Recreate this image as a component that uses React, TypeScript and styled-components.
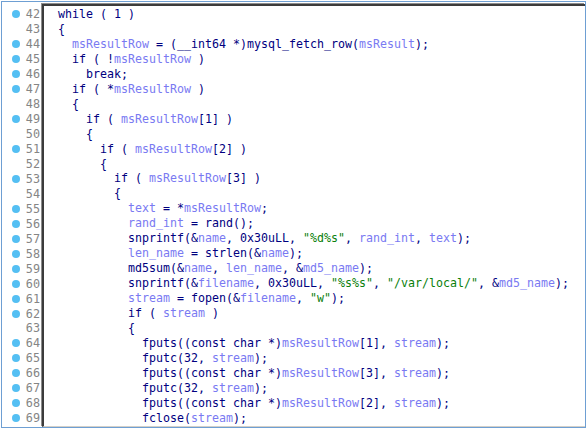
import React from "react";
import styled, { createGlobalStyle } from "styled-components";

const Global = createGlobalStyle`
  html, body { margin: 0; padding: 0; background: #ffffff; }
  body { width: 588px; height: 430px; overflow: hidden; }
`;

const ROW_H = 14.96;

const Frame = styled.div`
  box-sizing: border-box;
  margin: 1px;
  width: 585px;
  height: 427px;
  border: 1px solid #6e9fd3;
  display: flex;
  flex-direction: row;
  background: #ffffff;
  overflow: hidden;
`;

const Gutter = styled.div`
  width: 40px;
  flex: 0 0 40px;
  padding-top: 5px;
  display: flex;
  flex-direction: column;
  background: #ffffff;
`;

const GutterRow = styled.div`
  height: ${ROW_H}px;
  display: flex;
  align-items: center;
`;

const Dot = styled.span<{ $on: boolean }>`
  width: 8px;
  height: 8px;
  margin-left: 10px;
  border-radius: 50%;
  background: ${(p) => (p.$on ? "#54bff3" : "transparent")};
  flex: 0 0 8px;
`;

const LineNo = styled.span`
  flex: 1;
  text-align: right;
  padding-right: 2px;
  font-family: "DejaVu Sans Mono", monospace;
  font-size: 11.8px;
  color: #858585;
`;

const CodePanel = styled.div`
  flex: 1;
  margin-top: 2px;
  padding-top: 1px;
  border-top: 2px solid #3c3c3c;
  border-left: 2px solid #3c3c3c;
  border-bottom: 1px solid #d4d0c8;
  box-shadow: -1px -1px 0 #8d8d8d;
  background: #ffffff;
  padding-left: 14px;
  overflow: hidden;
`;

const CodeLine = styled.div`
  height: ${ROW_H}px;
  line-height: ${ROW_H}px;
  white-space: pre;
  font-family: "DejaVu Sans Mono", monospace;
  font-size: 11.63px;
  color: #000080;
`;

const Tok = styled.span<{ $kind: "var" | "str" | "def" }>`
  color: ${(p) =>
    p.$kind === "var" ? "#7a7af2" : p.$kind === "str" ? "#0a800a" : "#000080"};
`;

const VARS = new Set([
  "msResultRow",
  "msResult",
  "text",
  "rand_int",
  "name",
  "len_name",
  "md5_name",
  "filename",
  "stream",
]);

type Line = { n: number; dot: boolean; code: string };

const LINES: Line[] = [
  { n: 42, dot: true, code: "while ( 1 )" },
  { n: 43, dot: false, code: "{" },
  { n: 44, dot: true, code: "  msResultRow = (__int64 *)mysql_fetch_row(msResult);" },
  { n: 45, dot: true, code: "  if ( !msResultRow )" },
  { n: 46, dot: true, code: "    break;" },
  { n: 47, dot: true, code: "  if ( *msResultRow )" },
  { n: 48, dot: false, code: "  {" },
  { n: 49, dot: true, code: "    if ( msResultRow[1] )" },
  { n: 50, dot: false, code: "    {" },
  { n: 51, dot: true, code: "      if ( msResultRow[2] )" },
  { n: 52, dot: false, code: "      {" },
  { n: 53, dot: true, code: "        if ( msResultRow[3] )" },
  { n: 54, dot: false, code: "        {" },
  { n: 55, dot: true, code: "          text = *msResultRow;" },
  { n: 56, dot: true, code: "          rand_int = rand();" },
  { n: 57, dot: true, code: '          snprintf(&name, 0x30uLL, "%d%s", rand_int, text);' },
  { n: 58, dot: true, code: "          len_name = strlen(&name);" },
  { n: 59, dot: true, code: "          md5sum(&name, len_name, &md5_name);" },
  { n: 60, dot: true, code: '          snprintf(&filename, 0x30uLL, "%s%s", "/var/local/", &md5_name);' },
  { n: 61, dot: true, code: '          stream = fopen(&filename, "w");' },
  { n: 62, dot: true, code: "          if ( stream )" },
  { n: 63, dot: false, code: "          {" },
  { n: 64, dot: true, code: "            fputs((const char *)msResultRow[1], stream);" },
  { n: 65, dot: true, code: "            fputc(32, stream);" },
  { n: 66, dot: true, code: "            fputs((const char *)msResultRow[3], stream);" },
  { n: 67, dot: true, code: "            fputc(32, stream);" },
  { n: 68, dot: true, code: "            fputs((const char *)msResultRow[2], stream);" },
  { n: 69, dot: true, code: "            fclose(stream);" },
];

function tokenize(code: string) {
  const parts: { t: string; k: "var" | "str" | "def" }[] = [];
  const re = /("[^"]*")|([A-Za-z_][A-Za-z0-9_]*)|([^"A-Za-z_]+)/g;
  let m: RegExpExecArray | null;
  while ((m = re.exec(code))) {
    if (m[1]) parts.push({ t: m[1], k: "str" });
    else if (m[2]) parts.push({ t: m[2], k: VARS.has(m[2]) ? "var" : "def" });
    else parts.push({ t: m[3], k: "def" });
  }
  return parts;
}

export default function App() {
  return (
    <>
      <Global />
      <Frame>
        <Gutter>
          {LINES.map((l) => (
            <GutterRow key={l.n}>
              <Dot $on={l.dot} />
              <LineNo>{l.n}</LineNo>
            </GutterRow>
          ))}
        </Gutter>
        <CodePanel>
          {LINES.map((l) => (
            <CodeLine key={l.n}>
              {tokenize(l.code).map((p, i) => (
                <Tok key={i} $kind={p.k}>
                  {p.t}
                </Tok>
              ))}
            </CodeLine>
          ))}
        </CodePanel>
      </Frame>
    </>
  );
}
